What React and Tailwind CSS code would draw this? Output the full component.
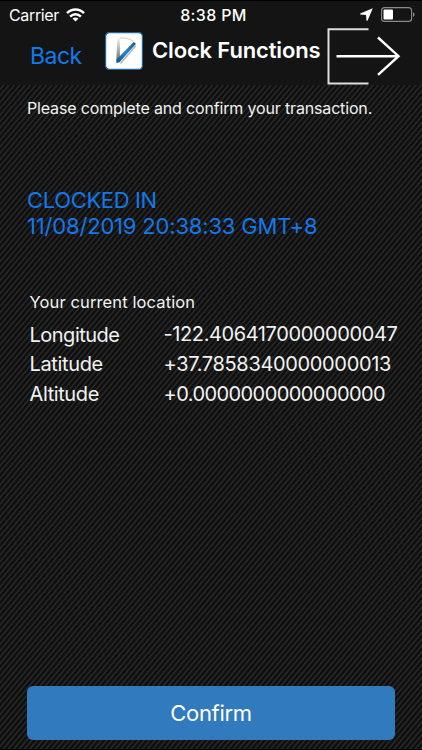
import React from 'react';

const LOCATION = [
  { label: 'Longitude', value: '-122.4064170000000047', row: 'h-[29px]', shift: 'pb-[2px]', labelTracking: 'tracking-[-0.5px]', tracking: 'tracking-[-0.4px]' },
  { label: 'Latitude', value: '+37.7858340000000013', row: 'h-[30px]', shift: 'pb-0', labelTracking: 'tracking-[-0.35px]', tracking: 'tracking-[-0.34px]' },
  { label: 'Altitude', value: '+0.0000000000000000', row: 'h-[30px]', shift: 'pb-0', labelTracking: 'tracking-[-0.4px]', tracking: 'tracking-[-0.57px]' },
];

function StatusBar() {
  return (
    <div className="grid grid-cols-3 items-center h-[27px] pl-[9px] pr-[7px] text-white text-[16px] leading-none">
      <div className="flex items-center gap-[7px]">
        <span className="w-[50px] tracking-[-0.35px]">Carrier</span>
        <svg width="19" height="14" viewBox="0 0 19 14" fill="none" stroke="white" strokeWidth="2.5">
          <path d="M1 5.2C6 0.3 13 0.3 18 5.2" />
          <path d="M4.1 8.6C7.2 5.6 11.8 5.6 14.9 8.6" />
          <path d="M9.5 13.5L6.5 10.6C8.2 9.2 10.8 9.2 12.5 10.6Z" fill="white" stroke="none" />
        </svg>
      </div>
      <span className="pl-[3px] text-center font-medium tracking-[0.35px] whitespace-nowrap">8:38 PM</span>
      <div className="flex items-center justify-end gap-[8px]">
        <svg width="13" height="13" viewBox="0 0 13 13" fill="white">
          <path d="M12.8 0.2L0.2 5.6L0.2 6.6L6 6.9L6.5 12.8L7.5 12.8Z" />
        </svg>
        <svg width="34" height="15" viewBox="0 0 34 15">
          <rect x="0.6" y="0.6" width="30" height="13.8" rx="3" fill="none" stroke="#8a8a8a" strokeWidth="1.1" />
          <rect x="2.5" y="2.5" width="9.5" height="10" rx="1" fill="white" />
          <path d="M32 5.2C34 6 34 9 32 9.8Z" fill="#8a8a8a" />
        </svg>
      </div>
    </div>
  );
}

function ClockLogo() {
  return (
    <svg className="shrink-0" width="38" height="38" viewBox="0 0 38 38">
      <defs>
        <linearGradient id="hand" x1="0" y1="0" x2="0" y2="1">
          <stop offset="0" stopColor="#ededed" />
          <stop offset="1" stopColor="#666666" />
        </linearGradient>
        <linearGradient id="blade" x1="0" y1="1" x2="1" y2="0">
          <stop offset="0" stopColor="#0f4f8c" />
          <stop offset="0.5" stopColor="#2585cb" />
          <stop offset="1" stopColor="#165a92" />
        </linearGradient>
      </defs>
      <rect x="0.6" y="0.6" width="36.8" height="36.8" rx="4" fill="white" stroke="#1d67a8" strokeWidth="1.2" />
      <path d="M14.5 6.3C19 5.3 24.5 6.5 28.5 9.5" fill="none" stroke="#c4c4c4" strokeWidth="0.9" />
      <path d="M12.4 7L14.8 7L15 25L11.2 30Z" fill="url(#hand)" />
      <path d="M15.5 31.5L31 13.5" fill="none" stroke="#b4b4b4" strokeWidth="1.5" />
      <path d="M11.3 31L11.8 27.3L28.7 10L31 11.8L14.6 30.3Z" fill="url(#blade)" />
    </svg>
  );
}

function NavBar() {
  return (
    <div className="flex items-start h-[57px] pl-[30px]">
      <button className="w-[75px] pt-[14px] text-left text-[#117bea] text-[23px] leading-[28px] tracking-[-0.5px]">Back</button>
      <div className="pt-[4px]"><ClockLogo /></div>
      <h1 className="w-[183px] shrink-0 pt-[8px] pl-[9px] text-white text-[22px] leading-[28px] font-semibold tracking-[-0.15px] whitespace-nowrap">Clock Functions</h1>
      <svg className="shrink-0" width="76" height="57" viewBox="0 0 76 57" fill="none" stroke="white">
        <path d="M42.5 1.2H2.5V55.4H42.5" stroke="#dddddd" strokeWidth="2" />
        <path d="M10.5 28.2H72" strokeWidth="2.4" />
        <path d="M52 9.5L72.5 28.2L52 46.8" strokeWidth="2.4" />
      </svg>
    </div>
  );
}

export default function App() {
  return (
    <main className="flex flex-col w-[422px] h-[750px] overflow-hidden border-y border-black bg-[#111111] font-['Inter',sans-serif] text-[#f2f2f2]">
      <header className="h-[84px] shrink-0 bg-[#141414]">
        <StatusBar />
        <NavBar />
      </header>

      <section className="flex flex-col flex-1 bg-[repeating-linear-gradient(130deg,#0f0f0f_0px,#0f0f0f_1.6px,#272727_2.5px,#272727_3.2px,#0f0f0f_4.1px)]">
        <p className="mt-[11px] ml-[27px] text-[16px] leading-[24px] tracking-[-0.16px] whitespace-nowrap">Please complete and confirm your transaction.</p>

        <div className="mt-[67px] ml-[27px] text-[#1279ea] text-[22px] leading-[26px] whitespace-nowrap">
          <div className="tracking-[-0.35px]">CLOCKED IN</div>
          <div className="tracking-[-0.18px]">11/08/2019 20:38:33 GMT+8</div>
        </div>

        <div className="mt-[51px] ml-[29.5px]">
          <h2 className="text-[16.5px] leading-[24px] tracking-[0.12px]">Your current location</h2>
          <div className="mt-[6px] text-[20px] leading-[30px]">
            {LOCATION.map(item => (
              <div key={item.label} className={`flex items-center ${item.row}`}>
                <span className={`w-[134px] ${item.labelTracking}`}>{item.label}</span>
                <span className={`whitespace-nowrap ${item.shift} ${item.tracking}`}>{item.value}</span>
              </div>
            ))}
          </div>
        </div>

        <button className="mt-auto mb-[9px] ml-[27px] w-[368px] h-[54px] rounded-[6px] bg-[#317abe] text-white text-[22px] tracking-[-0.3px]">Confirm</button>
      </section>
    </main>
  );
}
